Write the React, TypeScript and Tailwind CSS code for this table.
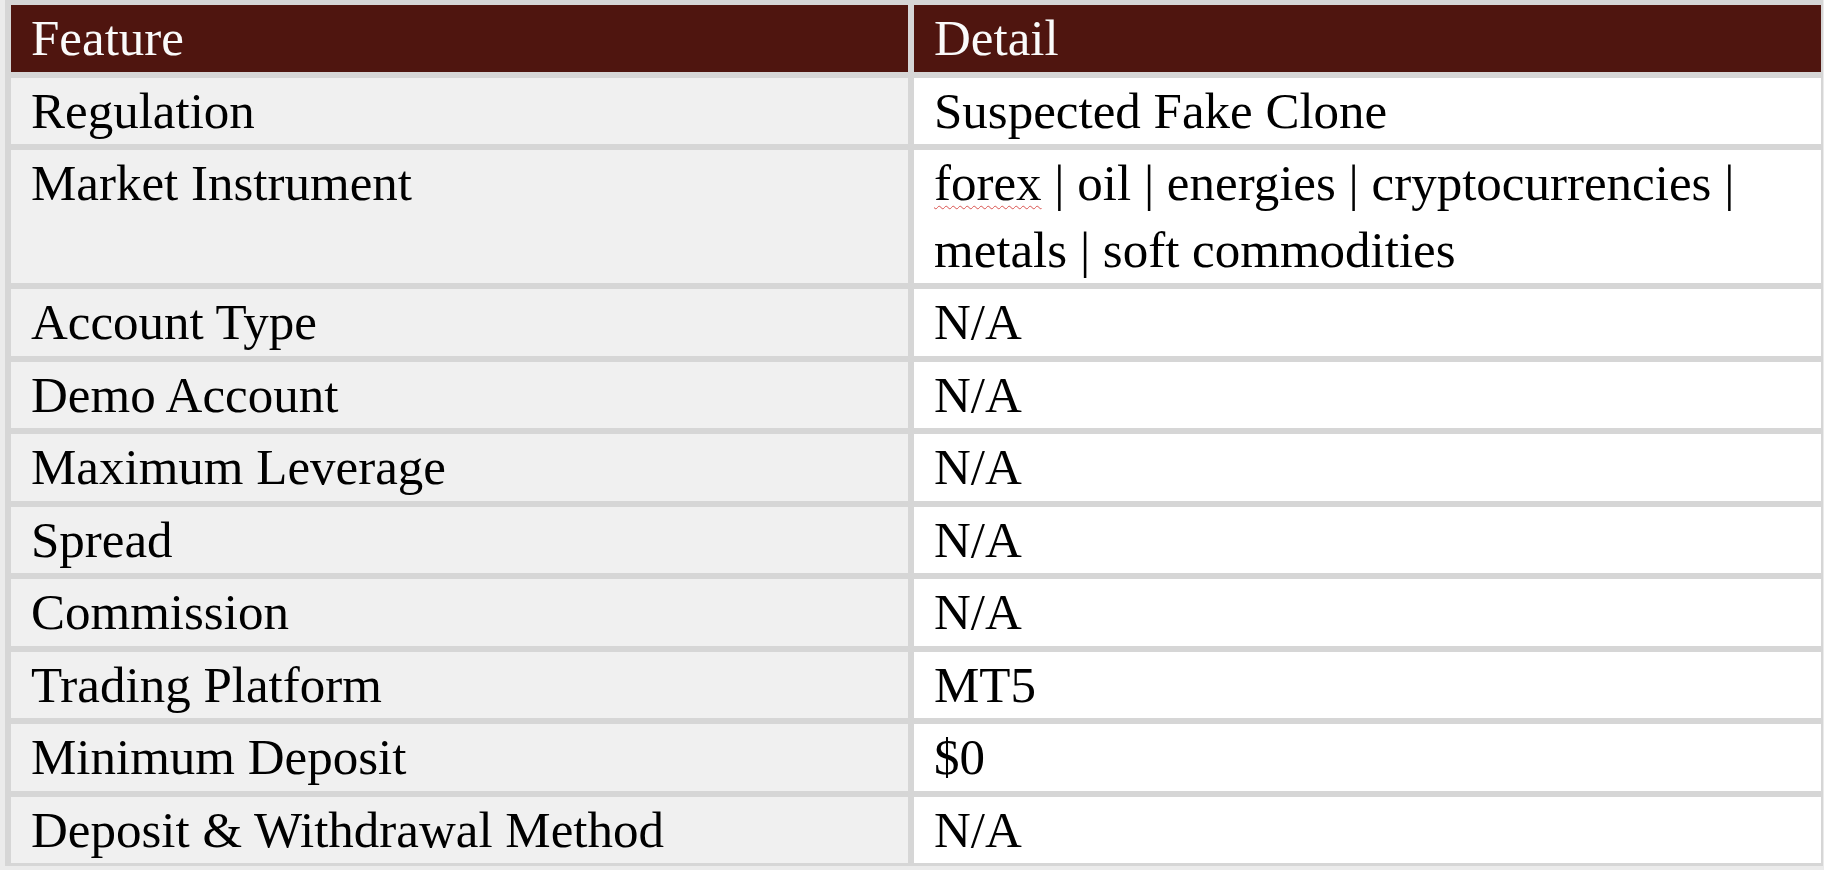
const rows: { feature: string; detail: React.ReactNode }[] = [
  { feature: "Regulation", detail: "Suspected Fake Clone" },
  {
    feature: "Market Instrument",
    detail: (
      <>
        <span className="underline decoration-wavy decoration-[#d9534f] decoration-[1px] underline-offset-[5px]">
          forex
        </span>{" "}
        | oil | energies | cryptocurrencies | metals | soft commodities
      </>
    ),
  },
  { feature: "Account Type", detail: "N/A" },
  { feature: "Demo Account", detail: "N/A" },
  { feature: "Maximum Leverage", detail: "N/A" },
  { feature: "Spread", detail: "N/A" },
  { feature: "Commission", detail: "N/A" },
  { feature: "Trading Platform", detail: "MT5" },
  { feature: "Minimum Deposit", detail: "$0" },
  { feature: "Deposit & Withdrawal Method", detail: "N/A" },
];

export default function App() {
  return (
    <div
      className="min-h-[870px] bg-[#ebebeb] pl-[5px] pr-[1px] text-[51px] leading-[66.5px] text-black"
      style={{ fontFamily: '"Liberation Serif", "Times New Roman", serif' }}
    >
      <div className="bg-[#d6d6d6] pt-[5px] pl-[6px] pr-[2px] pb-[3px]">
        <div className="grid grid-cols-[897px_1fr] gap-[6px]">
          <div className="bg-[#4f150f] px-5 text-[#fafafa]">Feature</div>
          <div className="bg-[#4f150f] px-5 text-[#fafafa]">Detail</div>
          {rows.map((row) => (
            <div key={row.feature} className="contents">
              <div className="bg-[#f0f0f0] px-5">{row.feature}</div>
              <div className="bg-white px-5">{row.detail}</div>
            </div>
          ))}
        </div>
      </div>
    </div>
  );
}
